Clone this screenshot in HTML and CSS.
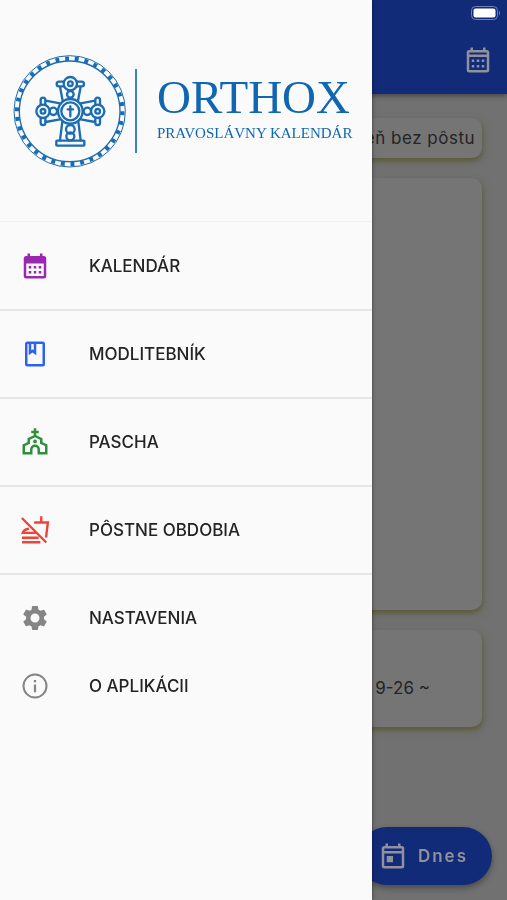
FILE: index.html
```html
<!DOCTYPE html>
<html lang="sk">
<head>
<meta charset="utf-8">
<meta name="viewport" content="width=device-width, initial-scale=1">
<title>Orthox</title>
<link rel="stylesheet" href="styles.css">
</head>
<body>
<div class="page">
  <header class="topbar">
    <svg class="battery" viewBox="0 0 30 14" aria-hidden="true">
      <rect x=".5" y=".5" width="26" height="13" rx="4" fill="none" stroke="#7181b5"/>
      <rect x="2.5" y="2.5" width="22" height="9" rx="2" fill="#fff"/>
      <path d="M28 4.500q2 2.500 0 5z" fill="#7181b5"/>
    </svg>
    <button class="icon-button" type="button" aria-label="Kalendár">
      <svg class="icon" viewBox="0 0 24 24" aria-hidden="true"><path d="M19 4h-1V2h-2v2H8V2H6v2H5a2 2 0 0 0-2 2v14a2 2 0 0 0 2 2h14a2 2 0 0 0 2-2V6a2 2 0 0 0-2-2zm0 16H5V9.500h14zM19 7.500H5V6h14zM7 11.500h2v2H7zm4 0h2v2h-2zm4 0h2v2h-2zM7 16h2v2H7zm4 0h2v2h-2zm4 0h2v2h-2z"/></svg>
    </button>
  </header>
  <main class="content">
    <section class="card card-fast">eň bez pôstu</section>
    <section class="card card-day"></section>
    <section class="card card-date">9-26 ~</section>
  </main>
  <button class="fab" type="button">
    <svg class="icon" viewBox="0 0 24 24" aria-hidden="true"><path d="M19 4h-1V2h-2v2H8V2H6v2H5a2 2 0 0 0-2 2v14a2 2 0 0 0 2 2h14a2 2 0 0 0 2-2V6a2 2 0 0 0-2-2zm0 16H5V10h14zm0-12H5V6h14zM7 12h5v5H7z"/></svg>
    <span>Dnes</span>
  </button>
</div>

<aside class="drawer">
  <div class="brand">
    <svg class="emblem" viewBox="0 0 405 420" fill="none" stroke="#1b6cb2" aria-hidden="true">
      <circle cx="209" cy="211" r="167" stroke-width="3"/>
      <circle cx="209" cy="211" r="151" stroke-width="4"/>
      <circle cx="209" cy="211" r="158" stroke-width="13" pathLength="340" stroke-dasharray="4 6"/>
      <g stroke-width="7" stroke-linejoin="round" stroke-linecap="round" transform="translate(0 -2)">
        <circle cx="211" cy="213" r="37"/>
        <circle cx="211" cy="213" r="27"/>
        <path d="M211 198v30M203 207h16"/>
        <circle cx="211" cy="130" r="20"/>
        <circle cx="211" cy="130" r="7"/>
        <circle cx="211" cy="162" r="10"/>
        <path d="M192 124h-15a7 7 0 0 0 0 14h15M230 124h15a7 7 0 0 1 0 14h-15M180 139l8 42M242 139l-8 42"/>
        <circle cx="129" cy="213" r="20"/>
        <circle cx="129" cy="213" r="7"/>
        <circle cx="160" cy="213" r="11"/>
        <path d="M122 194v-15a7 7 0 0 1 14 0v15M122 232v15a7 7 0 0 0 14 0v-15M137 181l43 8M137 245l43-8"/>
        <circle cx="293" cy="213" r="20"/>
        <circle cx="293" cy="213" r="7"/>
        <circle cx="262" cy="213" r="11"/>
        <path d="M300 194v-15a7 7 0 0 0-14 0v15M300 232v15a7 7 0 0 1-14 0v-15M285 181l-43 8M285 245l-43-8"/>
        <circle cx="211" cy="267" r="13"/>
        <circle cx="211" cy="288" r="12"/>
        <path d="M187 244l-7 56M235 244l7 56"/>
        <rect x="169" y="301" width="84" height="15" rx="2"/>
      </g>
    </svg>
    <div class="brand-text">
      <div class="brand-name">ORTHOX</div>
      <div class="brand-sub">PRAVOSLÁVNY KALENDÁR</div>
    </div>
  </div>
  <nav class="menu">
    <div class="menu-group">
      <a class="menu-item" href="#kalendar">
        <svg class="icon purple" viewBox="0 0 24 24" aria-hidden="true"><path d="M19 4h-1V2h-2v2H8V2H6v2H5a2 2 0 0 0-2 2v14a2 2 0 0 0 2 2h14a2 2 0 0 0 2-2V6a2 2 0 0 0-2-2zm0 16H5V10h14zM7 12h2v2H7zm4 0h2v2h-2zm4 0h2v2h-2zM7 16h2v2H7zm4 0h2v2h-2zm4 0h2v2h-2z"/></svg>
        <span>KALENDÁR</span>
      </a>
    </div>
    <div class="menu-group">
      <a class="menu-item" href="#modlitebnik">
        <svg class="icon blue" viewBox="0 0 24 24" aria-hidden="true"><path d="M18 2H6a2 2 0 0 0-2 2v16a2 2 0 0 0 2 2h12a2 2 0 0 0 2-2V4a2 2 0 0 0-2-2zM9 4h2v5l-1-.75L9 9zm9 16H6V4h1v9l3-2.250L13 13V4h5z"/></svg>
        <span>MODLITEBNÍK</span>
      </a>
    </div>
    <div class="menu-group">
      <a class="menu-item" href="#pascha">
        <svg class="icon green" viewBox="0 0 24 24" aria-hidden="true"><path fill-rule="evenodd" d="M18 12.220V9l-5-2.500V5h2V3h-2V1h-2v2H9v2h2v1.500L6 9v3.220L2 14v8h8v-4a2 2 0 0 1 4 0v4h8v-8zM20 20h-4v-2a4 4 0 0 0-8 0v2H4v-4.790l4-1.810v-3.120l4-2.020 4 2.020v3.120l4 1.790z"/><circle cx="12" cy="11.500" r="1.500"/></svg>
        <span>PASCHA</span>
      </a>
    </div>
    <div class="menu-group">
      <a class="menu-item" href="#postne-obdobia">
        <svg class="icon red" viewBox="0 0 24 24" aria-hidden="true"><path fill="none" stroke="currentColor" stroke-width="1.900" d="M1.500 2.400L21 22M1.600 21.800h14.700M1.600 18.200h13.300M12.500 14.300H2.200c.7-2 2.600-3 4.900-3.300M11.300 6h11L20.800 18M17 6V1"/></svg>
        <span>PÔSTNE OBDOBIA</span>
      </a>
    </div>
    <div class="menu-group">
      <a class="menu-item" href="#nastavenia">
        <svg class="icon grey" viewBox="0 0 24 24" aria-hidden="true"><path d="M19.140 12.940c.04-.3.060-.61.060-.94 0-.32-.02-.64-.07-.94l2.030-1.580c.18-.14.230-.41.120-.61l-1.920-3.320c-.12-.22-.37-.29-.59-.22l-2.390.96c-.5-.38-1.030-.7-1.620-.94l-.36-2.540c-.04-.24-.24-.41-.48-.41h-3.840c-.24 0-.43.170-.47.410l-.36 2.540c-.59.240-1.130.570-1.620.940l-2.390-.96c-.22-.08-.47 0-.59.220L2.740 8.870c-.12.210-.08.470.120.610l2.030 1.580c-.05.3-.09.630-.09.940s.02.640.070.940l-2.030 1.580c-.18.140-.23.410-.12.610l1.920 3.320c.12.220.37.290.59.220l2.390-.96c.5.380 1.030.7 1.620.940l.36 2.540c.05.240.24.410.48.410h3.840c.24 0 .44-.17.470-.41l.36-2.540c.59-.24 1.130-.56 1.620-.94l2.390.96c.22.080.47 0 .59-.22l1.920-3.320c.12-.22.070-.47-.12-.61zM12 15.600A3.600 3.600 0 1 1 12 8.400a3.600 3.600 0 0 1 0 7.200z"/></svg>
        <span>NASTAVENIA</span>
      </a>
      <a class="menu-item" href="#o-aplikacii">
        <svg class="icon grey" viewBox="0 0 24 24" aria-hidden="true"><circle cx="12" cy="12" r="9.200" fill="none" stroke="currentColor" stroke-width="1.600"/><path d="M11.100 10.800h1.800V17h-1.800zM11.100 7.200h1.800V9h-1.800z"/></svg>
        <span>O APLIKÁCII</span>
      </a>
    </div>
  </nav>
</aside>
</body>
</html>
```
FILE: styles.css
```css
* {
  box-sizing: border-box;
}

body {
  margin: 0;
  position: relative;
  font-family: Inter, "Liberation Sans", sans-serif;
  font-size: 17px;
  line-height: 24px;
  color: #242424;
  background: #717171;
}

button {
  font: inherit;
  border: 0;
}

.icon {
  width: 30px;
  height: 30px;
  flex: none;
  display: block;
  fill: currentColor;
}

.page {
  min-height: 100vh;
  display: flex;
  flex-direction: column;
}

.topbar {
  display: flex;
  flex-direction: column;
  align-items: flex-end;
  gap: 25px;
  padding: 6px 14px 19px;
  background: #122b78;
  box-shadow: 0 2px 5px rgba(0, 0, 0, 0.4);
}

.battery {
  width: 30px;
  height: 14px;
  margin-right: -8px;
}

.icon-button {
  padding: 0;
  color: #8f919c;
  background: none;
}

.content {
  flex: 1;
  display: flex;
  flex-direction: column;
  gap: 20px;
  padding: 24px 25px 173px;
}

.card {
  border-radius: 10px;
  background: #757575;
  box-shadow: 0 3px 4px #5e5c3b, 2px 3px 8px rgba(90, 90, 70, 0.4);
  text-align: right;
}

.card-fast {
  padding: 8px 7px;
  letter-spacing: 0.5px;
}

.card-day {
  flex: 1;
}

.card-date {
  padding: 46px 52px 27px;
}

.fab {
  position: fixed;
  right: 15px;
  bottom: 15px;
  display: flex;
  align-items: center;
  gap: 10px;
  padding: 14px 24px 14px 20px;
  border-radius: 29px;
  color: #8f919c;
  background: #122b78;
  box-shadow: 0 3px 6px rgba(0, 0, 0, 0.35);
  font-weight: 600;
  letter-spacing: 2px;
}

.drawer {
  position: absolute;
  top: 0;
  left: 0;
  width: calc(100% - 135px);
  min-height: 100%;
  background: #fafafa;
  box-shadow: 0 0 4px rgba(0, 0, 0, 0.5);
}

.brand {
  display: flex;
  align-items: center;
  padding: 41px 0 40px;
  border-bottom: 1px solid #f0f0f0;
}

.emblem {
  width: 135px;
  height: 140px;
  flex: none;
}

.brand-text {
  padding: 2px 0 10px 20px;
  border-left: 2px solid #3d82bd;
  color: #0f66b1;
  font-family: "Liberation Serif", serif;
  white-space: nowrap;
}

.brand-name {
  font-size: 47px;
  line-height: 52px;
}

.brand-sub {
  font-size: 15px;
  line-height: 20px;
}

.menu-group {
  padding: 9px 0;
  border-bottom: 2px solid #e6e6e6;
}

.menu-group:first-child {
  padding-top: 10px;
}

.menu-group:last-child {
  border-bottom: 0;
}

.menu-item {
  display: flex;
  align-items: center;
  gap: 39px;
  padding: 19px 20px;
  color: #242424;
  font-weight: 500;
  text-decoration: none;
}

.purple {
  color: #9828b0;
}

.blue {
  color: #2c62ee;
}

.green {
  color: #2f8f3a;
}

.red {
  color: #ef4337;
}

.grey {
  color: #858585;
}
```
